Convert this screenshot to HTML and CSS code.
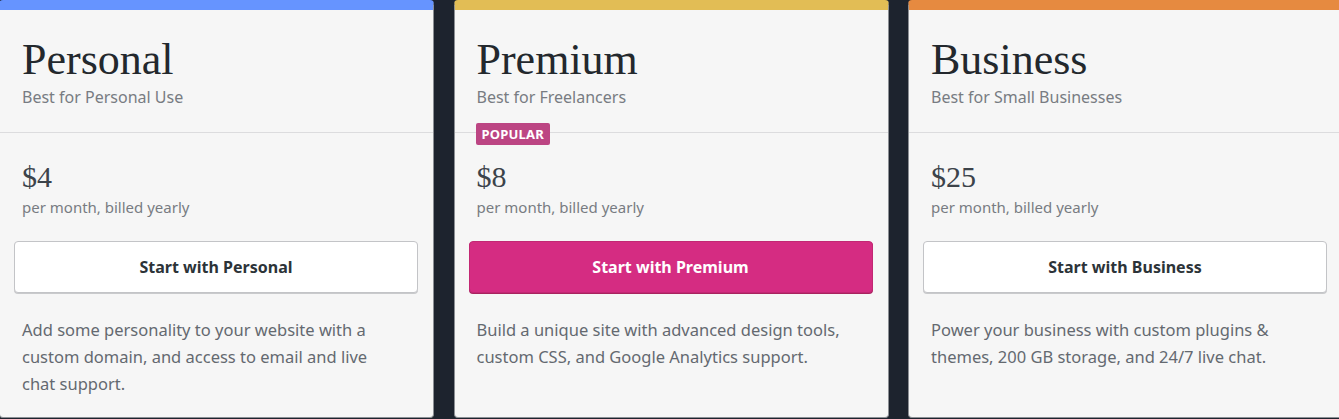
FILE: index.html
```html
<!DOCTYPE html>
<html lang="en">
<head>
<meta charset="utf-8">
<title>Plans</title>
<link rel="stylesheet" href="styles.css">
</head>
<body>
<main class="plans">
  <section class="plan plan--personal">
    <header class="plan-head">
      <h2 class="plan-name">Personal</h2>
      <p class="plan-tagline">Best for Personal Use</p>
    </header>
    <div class="plan-body">
      <div class="plan-price">$4</div>
      <div class="plan-billing">per month, billed yearly</div>
      <button class="plan-cta" type="button">Start with Personal</button>
      <p class="plan-desc">Add some personality to your website with a custom domain, and access to email and live chat support.</p>
    </div>
  </section>
  <section class="plan plan--premium">
    <header class="plan-head">
      <h2 class="plan-name">Premium</h2>
      <p class="plan-tagline">Best for Freelancers</p>
    </header>
    <div class="plan-body">
      <span class="plan-badge">Popular</span>
      <div class="plan-price">$8</div>
      <div class="plan-billing">per month, billed yearly</div>
      <button class="plan-cta plan-cta--primary" type="button">Start with Premium</button>
      <p class="plan-desc">Build a unique site with advanced design tools, custom CSS, and Google Analytics support.</p>
    </div>
  </section>
  <section class="plan plan--business">
    <header class="plan-head">
      <h2 class="plan-name">Business</h2>
      <p class="plan-tagline">Best for Small Businesses</p>
    </header>
    <div class="plan-body">
      <div class="plan-price">$25</div>
      <div class="plan-billing">per month, billed yearly</div>
      <button class="plan-cta" type="button">Start with Business</button>
      <p class="plan-desc">Power your business with custom plugins &amp; themes, 200 GB storage, and 24/7 live chat.</p>
    </div>
  </section>
</main>
</body>
</html>
```

FILE: styles.css
```css
html, body {
  margin: 0;
  padding: 0;
}

body {
  background: #1d232e;
  font-family: "Noto Sans", "Open Sans", sans-serif;
  overflow: hidden;
  height: 419px;
}

.plans {
  display: flex;
  gap: 19.5px;
  margin-left: -1px;
  align-items: flex-start;
}

.plan {
  flex: 0 0 435px;
  box-sizing: border-box;
  height: 418px;
  background: #f6f6f6;
  border: 1px solid #8c8f94;
  border-top: 10px solid #6694ff;
  border-radius: 4px;
  overflow: hidden;
}

.plan--premium { border-top-color: #e2bd55; }
.plan--business { border-top-color: #e68a40; }

.plan-head {
  padding: 27px 22px 23px;
  border-bottom: 1px solid #dcdcde;
}

.plan-name {
  margin: 0;
  font-family: "Liberation Serif", "Times New Roman", serif;
  font-weight: 400;
  font-size: 44px;
  line-height: 45px;
  color: #23282d;
}

.plan-tagline {
  margin: 3px 0 0;
  font-size: 16px;
  line-height: 24px;
  color: #787c82;
}

.plan-body {
  position: relative;
  padding: 26px 14px 0;
}

.plan-badge {
  position: absolute;
  top: -10px;
  left: 21px;
  height: 22px;
  padding: 0 6px;
  border-radius: 2px;
  background: #bc4583;
  color: #fff;
  font-size: 13px;
  font-weight: 700;
  line-height: 22px;
  text-transform: uppercase;
  letter-spacing: 0.2px;
}

.plan-price {
  padding: 0 8px;
  font-family: "Liberation Serif", "Times New Roman", serif;
  font-size: 30px;
  line-height: 36px;
  color: #3c434a;
}

.plan-billing {
  margin-top: 1px;
  padding: 0 8px;
  font-size: 15px;
  line-height: 22px;
  color: #787c82;
}

.plan-cta {
  display: block;
  box-sizing: border-box;
  width: 404px;
  height: 52px;
  margin-top: 23px;
  background: #fff;
  border: 1px solid #c3c4c7;
  border-radius: 4px;
  box-shadow: 0 1px 0 #c9cacc;
  font-family: "Noto Sans", "Open Sans", sans-serif;
  font-size: 16px;
  font-weight: 700;
  color: #2c3338;
  cursor: pointer;
}

.plan-cta--primary {
  background: #d52c82;
  border-color: #c22874;
  box-shadow: 0 1px 0 #a8235f;
  color: #fff;
}

.plan-desc {
  margin: 23px 0 0;
  padding: 0 25px 0 8px;
  font-size: 16.5px;
  line-height: 27px;
  color: #646970;
}
```
